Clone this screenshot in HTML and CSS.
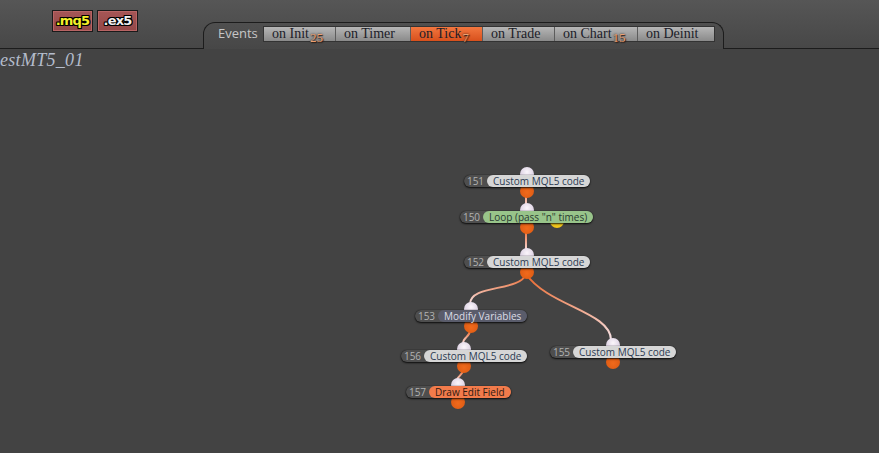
FILE: index.html
```html
<!DOCTYPE html>
<html lang="en">
<head>
  <meta charset="UTF-8">
  <title>TestMT5_01 - Events</title>
  <link rel="stylesheet" href="styles.css">
</head>
<body>
  <div class="topbar">
    <div class="bar-left">
      <span class="file-btn mq5">.mq5</span>
      <span class="file-btn ex5">.ex5</span>
    </div>
    <div class="events">
      <span class="events-label">Events</span>
      <div class="tabs">
        <span class="tab t-init">on Init<span class="count">25</span></span>
        <span class="tab t-timer">on Timer</span>
        <span class="tab t-tick active">on Tick<span class="count">7</span></span>
        <span class="tab t-trade">on Trade</span>
        <span class="tab t-chart">on Chart<span class="count">15</span></span>
        <span class="tab t-deinit">on Deinit</span>
      </div>
    </div>
    <div class="bar-right"></div>
  </div>

  <div class="canvas">
    <div class="title">estMT5_01</div>

    <svg class="wires" width="879" height="404" viewBox="0 49 879 404">
      <defs>
        <linearGradient id="w1" gradientUnits="userSpaceOnUse" x1="0" y1="194" x2="0" y2="205">
          <stop offset="0" stop-color="#f08a62"/><stop offset="1" stop-color="#f4d6d2"/>
        </linearGradient>
        <linearGradient id="w2" gradientUnits="userSpaceOnUse" x1="0" y1="230" x2="0" y2="250">
          <stop offset="0" stop-color="#ec6a30"/><stop offset="1" stop-color="#f6dada"/>
        </linearGradient>
        <linearGradient id="w3" gradientUnits="userSpaceOnUse" x1="0" y1="274" x2="0" y2="304">
          <stop offset="0" stop-color="#ec6426"/><stop offset="1" stop-color="#f6e4e8"/>
        </linearGradient>
        <linearGradient id="w4" gradientUnits="userSpaceOnUse" x1="0" y1="274" x2="0" y2="340">
          <stop offset="0" stop-color="#ec6426"/><stop offset="1" stop-color="#f6e4e8"/>
        </linearGradient>
        <linearGradient id="w5" gradientUnits="userSpaceOnUse" x1="0" y1="330" x2="0" y2="344">
          <stop offset="0" stop-color="#ec6426"/><stop offset="1" stop-color="#f6e4e8"/>
        </linearGradient>
        <linearGradient id="w6" gradientUnits="userSpaceOnUse" x1="0" y1="370" x2="0" y2="381">
          <stop offset="0" stop-color="#ec6426"/><stop offset="1" stop-color="#f6e4e8"/>
        </linearGradient>
      </defs>
      <g fill="none" stroke-width="2" stroke-linecap="round">
        <path d="M526 194 L526 205" stroke="url(#w1)"/>
        <path d="M526 230 L526 250" stroke="url(#w2)"/>
        <path d="M526 274 C520 292 470 284 470 304" stroke="url(#w3)"/>
        <path d="M526 274 C548 306 611 312 611 340" stroke="url(#w4)"/>
        <path d="M470 330 C470 338 463 336 463 344" stroke="url(#w5)"/>
        <path d="M463 370 C463 376 457 375 457 381" stroke="url(#w6)"/>
      </g>
    </svg>

    <div class="node" style="left:464px;top:126px">
      <span class="num">151</span><span class="label light">Custom MQL5 code</span>
    </div>
    <div class="node" style="left:460px;top:162px">
      <span class="num">150</span><span class="label green">Loop (pass "n" times)</span>
      <span class="extra-out" style="left:97px"></span>
    </div>
    <div class="node" style="left:464px;top:207px">
      <span class="num">152</span><span class="label light">Custom MQL5 code</span>
    </div>
    <div class="node" style="left:415px;top:261px">
      <span class="num">153</span><span class="label slate">Modify Variables</span>
    </div>
    <div class="node" style="left:401px;top:301px">
      <span class="num">156</span><span class="label light">Custom MQL5 code</span>
    </div>
    <div class="node" style="left:550px;top:297px">
      <span class="num">155</span><span class="label light">Custom MQL5 code</span>
    </div>
    <div class="node" style="left:406px;top:337px">
      <span class="num">157</span><span class="label orange">Draw Edit Field</span>
    </div>
  </div>
</body>
</html>
```

FILE: styles.css
```css
body { margin: 0; background: #434343; font-family: "Open Sans", sans-serif; overflow: hidden; height: 453px; }

.topbar { display: flex; height: 49px; background: linear-gradient(#565656, #474747); }
.bar-left { width: 203px; box-sizing: border-box; border-bottom: 1px solid #1c1c1c; padding: 10px 0 0 52px; display: flex; gap: 4px; align-items: flex-start; }
.bar-right { flex: 1; border-bottom: 1px solid #1c1c1c; }

.file-btn { width: 41px; height: 22px; box-sizing: border-box; border: 1px solid #1a1a1a; background: linear-gradient(#a65656, #934848); box-shadow: inset 0 0 0 1px #b86464; font: bold 13px "DejaVu Sans", sans-serif; letter-spacing: -0.8px; line-height: 19px; text-align: center; text-shadow: 1px 0 0 #000, -1px 0 0 #000, 0 1px 0 #000, 0 -1px 0 #000, 1px 1px 0 #000, -1px -1px 0 #000, 1px -1px 0 #000, -1px 1px 0 #000; }
.mq5 { color: #f4f02a; }
.ex5 { color: #f2f2f2; }

.events { width: 521px; height: 27px; box-sizing: border-box; margin-top: 22px; border: 1px solid #1c1c1c; border-bottom: 0; border-radius: 12px 12px 0 0; padding: 3px 0 0 14px; display: flex; align-items: flex-start; }
.events-label { font-size: 13px; line-height: 14px; color: #c6c6c6; width: 45px; }
.tabs { display: flex; height: 14px; border: 1px solid #333; }
.tab { position: relative; box-sizing: border-box; height: 14px; border-left: 1px solid #5c5c5c; background: linear-gradient(#b6b6b6, #8a8a8a); font: 14px "Liberation Serif", serif; line-height: 13px; color: #1c1c28; padding-left: 8px; }
.tab:first-child { border-left: 0; }
.tab.active { background: linear-gradient(#f2773f, #d8501c); }
.t-init { width: 71px; }
.t-timer { width: 75px; }
.t-tick { width: 72px; }
.t-trade { width: 72px; }
.t-chart { width: 83px; }
.t-deinit { width: 77px; }
.count { position: relative; z-index: 1; top: 4px; margin-left: 1px; font-size: 13px; color: #eca070; text-shadow: 0 0 2px #2a1e18, 1px 1px 1px #2a1e18; }

.canvas { position: relative; z-index: 0; height: 404px; }
.title { font: italic 18px "Liberation Serif", serif; color: #b4bccb; line-height: 20px; padding-top: 1px; letter-spacing: 0.3px; }
.wires { position: absolute; left: 0; top: 0; z-index: -2; }

.node { position: absolute; display: flex; height: 12px; border-radius: 6px; background: #4e4e4e; box-shadow: 0 1px 2px rgba(0, 0, 0, 0.8), 0 0 1px rgba(0, 0, 0, 0.8); font-size: 10px; line-height: 12px; }
.node::before { content: ""; position: absolute; left: 50%; top: -8px; width: 14px; height: 14px; margin-left: -7px; border-radius: 50%; background: radial-gradient(circle at 50% 35%, #fbf6fb, #d9cde0 70%); z-index: -1; }
.node::after { content: ""; position: absolute; left: 50%; top: 9px; width: 14px; height: 14px; margin-left: -7px; border-radius: 50%; background: radial-gradient(circle at 50% 60%, #f06a1c, #d65510); z-index: -1; }
.num { width: 23px; text-align: center; color: #b2b2b2; }
.label { border-radius: 6px; padding: 0 6px; white-space: nowrap; }
.light { background: #d6d6d6; color: #2c3a52; }
.green { background: #98c48a; color: #283a30; }
.slate { background: #5a5c6b; color: #dcdde6; }
.orange { background: #f27b4b; color: #2e1a12; }
.extra-out { position: absolute; top: 5px; width: 14px; height: 12px; margin-left: -7px; border-radius: 0 0 7px 7px; background: #f2c61a; z-index: -1; }
```
